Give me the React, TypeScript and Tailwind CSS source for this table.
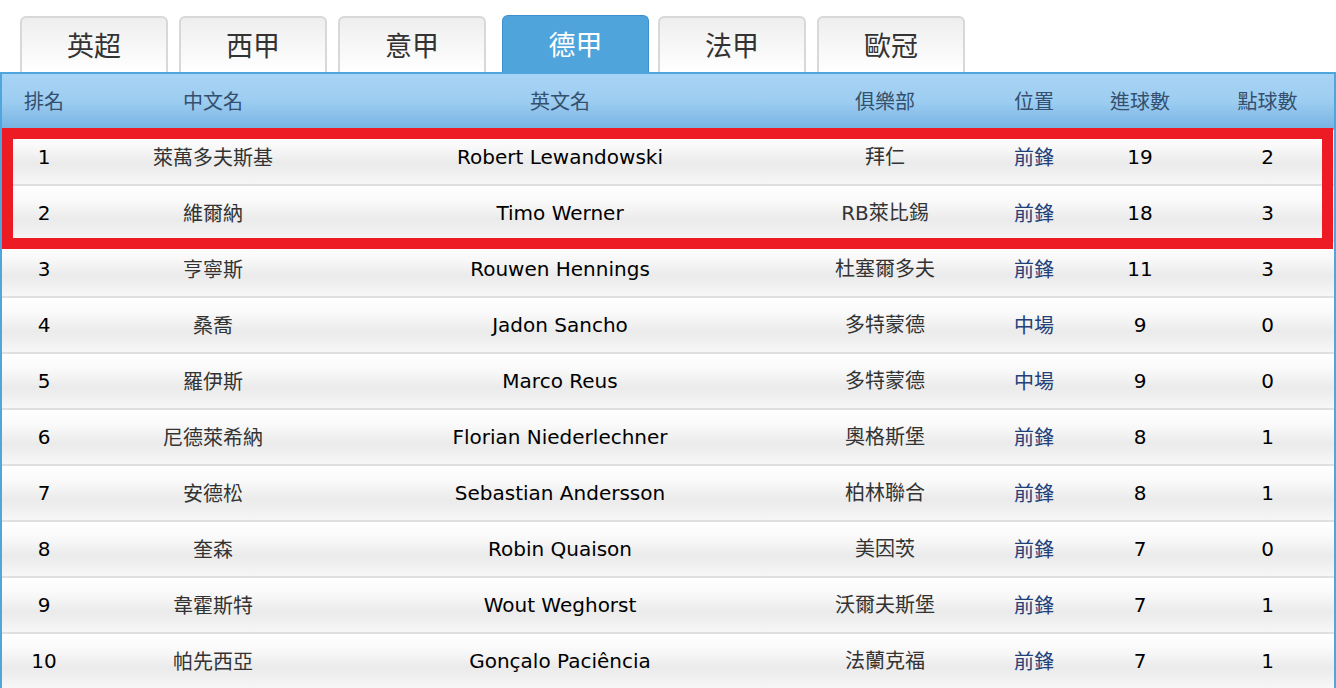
const tabs = ["英超", "西甲", "意甲", "德甲", "法甲", "歐冠"];

const heads = ["排名", "中文名", "英文名", "俱樂部", "位置", "進球數", "點球數"];
const widths = ["w-[84px]", "w-[254px]", "w-[440px]", "w-[210px]", "w-[88px]", "w-[124px]", "w-[131px]"];

const players = [
  { rank: "1", zh: "萊萬多夫斯基", en: "Robert Lewandowski", club: "拜仁", pos: "前鋒", goals: "19", pen: "2" },
  { rank: "2", zh: "維爾納", en: "Timo Werner", club: "RB萊比錫", pos: "前鋒", goals: "18", pen: "3" },
  { rank: "3", zh: "亨寧斯", en: "Rouwen Hennings", club: "杜塞爾多夫", pos: "前鋒", goals: "11", pen: "3" },
  { rank: "4", zh: "桑喬", en: "Jadon Sancho", club: "多特蒙德", pos: "中場", goals: "9", pen: "0" },
  { rank: "5", zh: "羅伊斯", en: "Marco Reus", club: "多特蒙德", pos: "中場", goals: "9", pen: "0" },
  { rank: "6", zh: "尼德萊希納", en: "Florian Niederlechner", club: "奧格斯堡", pos: "前鋒", goals: "8", pen: "1" },
  { rank: "7", zh: "安德松", en: "Sebastian Andersson", club: "柏林聯合", pos: "前鋒", goals: "8", pen: "1" },
  { rank: "8", zh: "奎森", en: "Robin Quaison", club: "美因茨", pos: "前鋒", goals: "7", pen: "0" },
  { rank: "9", zh: "韋霍斯特", en: "Wout Weghorst", club: "沃爾夫斯堡", pos: "前鋒", goals: "7", pen: "1" },
  { rank: "10", zh: "帕先西亞", en: "Gonçalo Paciência", club: "法蘭克福", pos: "前鋒", goals: "7", pen: "1" },
];

const cjk = "font-['Noto_Sans_CJK_TC',sans-serif]";
const latin = "font-['DejaVu_Sans','Noto_Sans_CJK_TC',sans-serif]";

const App = () => {
  return (
    <div className="w-[1336px] h-[688px] overflow-hidden bg-white">
      <div className="flex items-end gap-[11px] pl-[20px] pt-[16px] h-[72px]">
        {tabs.map((t, i) =>
          i === 3 ? (
            <div
              key={t}
              className={`w-[147px] h-[57px] ml-[5px] mr-[-2px] flex items-center justify-center rounded-t-[6px] border border-b-0 border-[#3a8fcc] bg-[#50a4dc] text-white text-[27px] ${cjk}`}
            >
              {t}
            </div>
          ) : (
            <div
              key={t}
              className={`w-[148px] h-[56px] flex items-center justify-center rounded-t-[6px] border-2 border-b-0 border-[#d8d8d8] bg-gradient-to-b from-[#eeeeee] to-white text-[#333] text-[27px] ${cjk}`}
            >
              {t}
            </div>
          )
        )}
      </div>

      <div className="relative border-2 border-[#4ea6dc] w-[1336px]">
        <div className="flex h-[56px] items-center bg-gradient-to-b from-[#a8d4f5] via-[#9dcdf1] to-[#78b4e3] border-b-2 border-[#6aa8d8]">
          {heads.map((h, i) => (
            <div key={h} className={`${widths[i]} text-center text-[20px] text-[#34506e] ${cjk}`}>
              {h}
            </div>
          ))}
        </div>

        {players.map((p) => (
          <div
            key={p.rank}
            className="flex h-[56px] items-center bg-[linear-gradient(to_bottom,#ffffff_0%,#f9f9f9_30%,#ebebeb_62%,#f6f6f6_100%)] border-b-2 border-[#e0e0e0]"
          >
            <div className={`${widths[0]} text-center text-[20px] text-black ${latin}`}>{p.rank}</div>
            <div className={`${widths[1]} text-center text-[20px] text-[#333] ${cjk}`}>{p.zh}</div>
            <div className={`${widths[2]} text-center text-[20px] text-black ${latin}`}>{p.en}</div>
            <div className={`${widths[3]} text-center text-[20px] text-[#333] ${latin}`}>{p.club}</div>
            <div className={`${widths[4]} text-center text-[20px] text-[#22407a] ${cjk}`}>{p.pos}</div>
            <div className={`${widths[5]} text-center text-[20px] text-black ${latin}`}>{p.goals}</div>
            <div className={`${widths[6]} text-center text-[20px] text-black ${latin}`}>{p.pen}</div>
          </div>
        ))}

        {/* highlight annotation over the top two rows */}
        <div className="absolute left-0 top-[54px] w-[1331px] h-[121px] border-[11px] border-[#ed1c24] pointer-events-none" />
      </div>
    </div>
  );
};

export default App;
